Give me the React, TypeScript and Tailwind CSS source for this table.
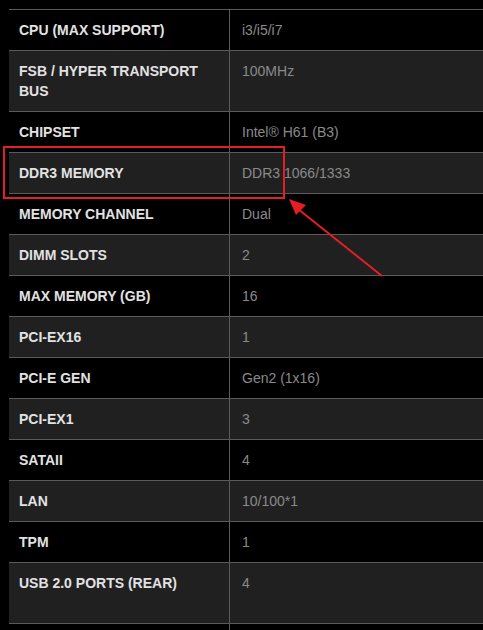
import React, { FC } from "react";

type Spec = { label: string; value: string; tall?: boolean };

const specs: Spec[] = [
    { label: "CPU (MAX SUPPORT)", value: "i3/i5/i7" },
    { label: "FSB / HYPER TRANSPORT BUS", value: "100MHz" },
    { label: "CHIPSET", value: "Intel® H61 (B3)" },
    { label: "DDR3 MEMORY", value: "DDR3 1066/1333" },
    { label: "MEMORY CHANNEL", value: "Dual" },
    { label: "DIMM SLOTS", value: "2" },
    { label: "MAX MEMORY (GB)", value: "16" },
    { label: "PCI-EX16", value: "1" },
    { label: "PCI-E GEN", value: "Gen2 (1x16)" },
    { label: "PCI-EX1", value: "3" },
    { label: "SATAII", value: "4" },
    { label: "LAN", value: "10/100*1" },
    { label: "TPM", value: "1" },
    { label: "USB 2.0 PORTS (REAR)", value: "4", tall: true },
    // next row continues below the fold
    { label: "", value: "" },
];

const App: FC = () => {
    return (
        <div className="relative w-[483px] h-[630px] overflow-hidden bg-black font-['Liberation_Sans',Arial,sans-serif]">
            <div className="pt-[9px] pl-[9px]">
                <div className="border-t border-[#5a5a5a]">
                    {specs.map((s, i) => (
                        <div
                            key={i}
                            className={`grid grid-cols-[221px_1fr] min-h-[40px] border-b border-[#5a5a5a] ${i % 2 === 1 ? "bg-[#202020]" : "bg-black"}`}
                        >
                            <div
                                className={`border-r border-[#5a5a5a] pl-[10px] pr-[10px] pt-[10px] text-[14px] leading-[20px] font-bold text-[#e2e2e2] ${s.tall ? "pb-[30px]" : "pb-[10px]"}`}
                            >
                                {s.label}
                            </div>
                            <div className="pl-[12px] pt-[10px] pb-[10px] text-[14px] leading-[20px] text-[#8a8a8a]">
                                {s.value}
                            </div>
                        </div>
                    ))}
                </div>
            </div>

            {/* highlight box */}
            <div className="absolute left-[3px] top-[146px] w-[282px] h-[53px] border-2 border-[#e31e24]" />

            {/* arrow */}
            <svg className="absolute left-0 top-0" width="483" height="630">
                <line x1="382" y1="276" x2="298" y2="209" stroke="#e31e24" strokeWidth="2" />
                <polygon points="289,199 306,205 296,215" fill="#e31e24" />
            </svg>
        </div>
    );
};

export default App;
